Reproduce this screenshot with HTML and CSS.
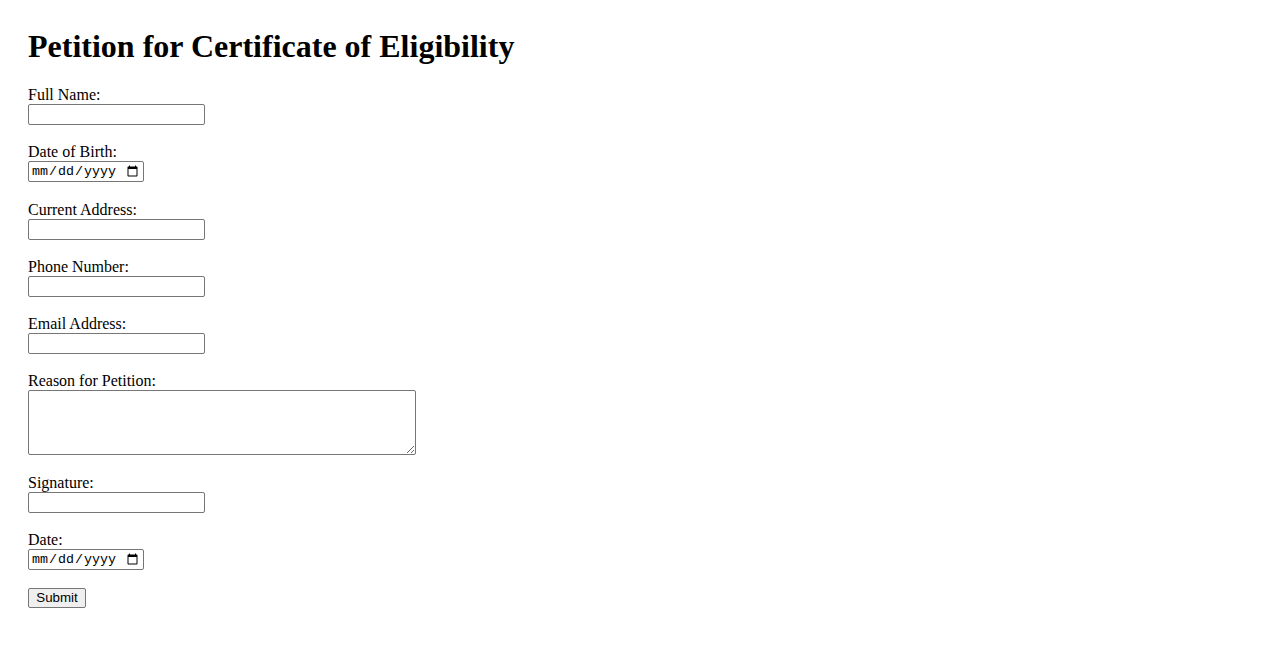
FILE: index.html
```html
<!DOCTYPE html>
<html lang="en">
<head>
<meta charset="utf-8">
<title>Petition for Certificate of Eligibility</title>
<link rel="stylesheet" href="styles.css">
</head>
<body>
<h1 class="title">Petition for Certificate of Eligibility</h1>
<form class="form">
  <div class="field">
    <label class="label" for="name">Full Name:</label>
    <input class="text-input" type="text" id="name">
  </div>
  <div class="field">
    <label class="label" for="dob">Date of Birth:</label>
    <input class="date-input" type="date" id="dob">
  </div>
  <div class="field">
    <label class="label" for="addr">Current Address:</label>
    <input class="text-input" type="text" id="addr">
  </div>
  <div class="field">
    <label class="label" for="phone">Phone Number:</label>
    <input class="text-input" type="tel" id="phone">
  </div>
  <div class="field">
    <label class="label" for="email">Email Address:</label>
    <input class="text-input" type="email" id="email">
  </div>
  <div class="field">
    <label class="label" for="reason">Reason for Petition:</label>
    <textarea class="textarea" id="reason"></textarea>
  </div>
  <div class="field">
    <label class="label" for="sig">Signature:</label>
    <input class="text-input" type="text" id="sig">
  </div>
  <div class="field">
    <label class="label" for="date">Date:</label>
    <input class="date-input" type="date" id="date">
  </div>
  <button class="submit" type="submit">Submit</button>
</form>
</body>
</html>
```

FILE: styles.css
```css
html, body {
  background: #ffffff;
}
body {
  margin: 0;
  padding: 28px;
  font-family: "Liberation Serif", "Times New Roman", serif;
  font-size: 16px;
  color: #000000;
}
.title {
  font-size: 32px;
  font-weight: bold;
  line-height: 37px;
  margin: 0 0 21px 0;
}
.form {
  margin: 0;
}
.field {
  margin-bottom: 18.25px;
}
.label {
  display: block;
  line-height: 18px;
  height: 18px;
}
.text-input,
.date-input,
.textarea {
  display: block;
  box-sizing: border-box;
  margin: 0;
  border: 1px solid #767676;
  border-radius: 2px;
  background: #ffffff;
  color: #000000;
}
.text-input {
  width: 177px;
  height: 21px;
  padding: 1px 2px;
  font-family: "Liberation Sans", Arial, sans-serif;
  font-size: 13.333px;
}
.date-input {
  width: 116px;
  height: 21px;
  padding: 1px 2px;
  font-family: "Liberation Mono", monospace;
  font-size: 13.333px;
}
.textarea {
  width: 388px;
  height: 65px;
  padding: 2px;
  font-family: "Liberation Mono", monospace;
  font-size: 13.333px;
  resize: both;
}
.submit {
  display: block;
  box-sizing: border-box;
  width: 58px;
  height: 20px;
  margin: 0;
  padding: 1px 6px;
  border: 1px solid #767676;
  border-radius: 2px;
  background: #efefef;
  color: #000000;
  font-family: "Liberation Sans", Arial, sans-serif;
  font-size: 13.333px;
  line-height: 16px;
}
```
